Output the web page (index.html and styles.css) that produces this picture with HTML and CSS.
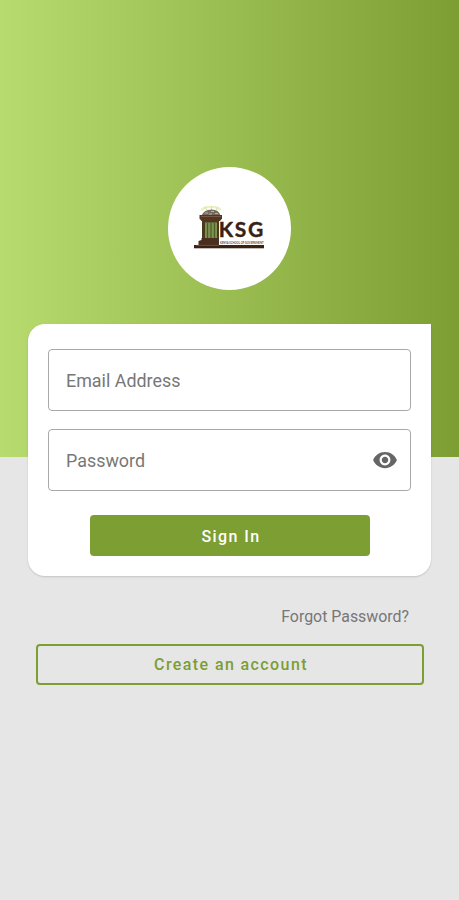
FILE: index.html
```html
<!DOCTYPE html>
<html lang="en">

<head>
    <meta charset="UTF-8">
    <meta name="viewport" content="width=device-width, initial-scale=1.0">
    <title>Sign In</title>
    <link rel="stylesheet" href="styles.css">
</head>

<body>
    <main class="page">
        <div class="logo">
            <svg width="73" height="48" viewBox="0 0 73 48" role="img" aria-label="KSG">
                <!-- torch glow -->
                <path d="M8 4 Q18 -3 28 4" fill="none" stroke="#e6f3c0" stroke-width="2.5" />
                <path d="M12 1 L14 4 M18.5 0 V4 M25 1 L23 4" stroke="#cfe59a" stroke-width="1" />
                <!-- column -->
                <path d="M8.5 9.5 Q11 3.5 18.5 3.5 Q26 3.5 27.5 9.5 Z" fill="#77695d" />
                <path d="M12 7 H15 M18 5.5 H21 M16 8 H19 M22 7.5 H25" stroke="#b9afa4" stroke-width="1" />
                <path d="M6.5 9 H29 V12.5 L27 15 H8.5 L6.5 12.5 Z" fill="#533522" />
                <path d="M8 10.5 H28" stroke="#80664f" stroke-width=".7" />
                <rect x="9" y="15" width="17" height="17" fill="#4a3a20" />
                <rect x="12" y="16.5" width="12" height="16" fill="#7d9150" />
                <path d="M14.5 17 V32 M18 17 V32 M21.5 17 V32" stroke="#4d5d28" stroke-width="1.2" />
                <path d="M8.5 32 H26 V39 H5.5 V35 L8.5 34 Z" fill="#4a2e1f" />
                <!-- base -->
                <rect x="1" y="39" width="70" height="3.3" fill="#3b2113" />
                <path d="M3 39.4 H26" stroke="#80664f" stroke-width=".7" />
                <text class="logo-name" x="25.8" y="31.3">KSG</text>
                <text class="logo-tagline" x="27" y="37.7" textLength="43.5" lengthAdjust="spacingAndGlyphs">KENYA SCHOOL OF GOVERNMENT</text>
            </svg>
        </div>

        <form class="card">
            <div class="field">
                <input type="email" name="email" placeholder="Email Address" aria-label="Email Address">
            </div>
            <div class="field">
                <input type="password" name="password" placeholder="Password" aria-label="Password">
                <svg class="eye" width="26" height="26" viewBox="0 0 24 24">
                    <path fill="#666" d="M12 4.5C7 4.5 2.73 7.61 1 12c1.73 4.39 6 7.5 11 7.5s9.27-3.11 11-7.5c-1.73-4.39-6-7.5-11-7.5zM12 17c-2.76 0-5-2.24-5-5s2.24-5 5-5 5 2.24 5 5-2.24 5-5 5zm0-8c-1.66 0-3 1.34-3 3s1.34 3 3 3 3-1.34 3-3-1.34-3-3-3z" />
                </svg>
            </div>
            <button type="submit" class="btn-signin">Sign In</button>
        </form>

        <a class="forgot" href="#">Forgot Password?</a>
        <button type="button" class="btn-create">Create an account</button>
    </main>
</body>

</html>
```
FILE: styles.css
```css
* {
    box-sizing: border-box;
}

body {
    margin: 0;
    background-color: #e6e6e6;
    font-family: Roboto, "Liberation Sans", sans-serif;
}

.page {
    display: flex;
    flex-direction: column;
    align-items: center;
    min-height: 900px;
    padding-top: 167px;
    background: linear-gradient(to right, #b8db70, #7c9e32) no-repeat;
    background-size: 100% 457px;
}

.logo {
    display: flex;
    justify-content: center;
    width: 123px;
    height: 123px;
    padding-top: 39px;
    border-radius: 50%;
    background-color: white;
}

.logo-name {
    font-family: Lato, sans-serif;
    font-size: 21px;
    font-weight: 700;
    letter-spacing: 1.6px;
    fill: #3b2113;
    stroke: #3b2113;
    stroke-width: 0.4px;
}

.logo-tagline {
    font-family: Lato, sans-serif;
    font-size: 2.7px;
    font-weight: 700;
    fill: #5d4a3c;
}

.card {
    display: flex;
    flex-direction: column;
    width: 403px;
    height: 252px;
    margin-top: 33.5px;
    padding: 25px 20px 0;
    border-radius: 17px 0 17px 17px;
    background-color: white;
    box-shadow: 0 1px 2px rgba(0, 0, 0, 0.15);
}

.field {
    display: flex;
    align-items: center;
    height: 62.5px;
    margin-bottom: 17.5px;
    padding: 0 12px 0 17px;
    border: 1px solid #a8a8a8;
    border-radius: 4px;
}

.field input {
    flex: 1;
    min-width: 0;
    padding: 2px 0 0;
    border: none;
    outline: none;
    background: none;
    font-family: inherit;
    font-size: 17.9px;
}

.field input::placeholder {
    color: #777;
}

.btn-signin {
    align-self: center;
    width: 280px;
    height: 41px;
    margin-top: 6px;
    padding: 2px 0 0 3px;
    border: none;
    border-radius: 4px;
    background-color: #7c9e32;
    color: white;
    font-family: inherit;
    font-size: 16px;
    font-weight: 500;
    letter-spacing: 1.4px;
}

.forgot {
    align-self: flex-end;
    margin: 31px 50px 0 0;
    color: #777;
    font-size: 15.9px;
    line-height: 19px;
    text-decoration: none;
}

.btn-create {
    width: 388px;
    height: 41px;
    margin-top: 18px;
    padding: 1px 0 0 3px;
    border: 2px solid #7c9e32;
    border-radius: 4px;
    background: none;
    color: #7c9e32;
    font-family: inherit;
    font-size: 16px;
    font-weight: 500;
    letter-spacing: 1.4px;
}
```
